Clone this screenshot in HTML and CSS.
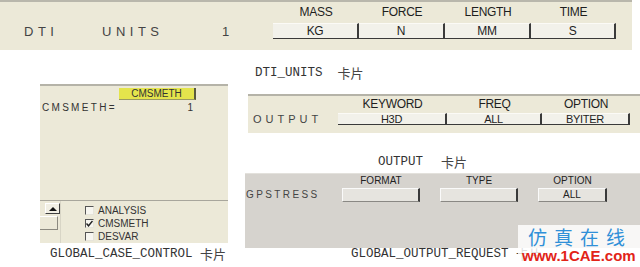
FILE: index.html
```html
<!DOCTYPE html>
<html lang="zh">
<head>
<meta charset="utf-8">
<title>DTI UNITS</title>
<link rel="stylesheet" href="styles.css">
</head>
<body>
<div class="page">
  <div class="units">
    <div class="units-grid">
      <span class="blank"></span>
      <span class="hd">MASS</span>
      <span class="hd">FORCE</span>
      <span class="hd">LENGTH</span>
      <span class="hd">TIME</span>
      <span class="units-labels"><span class="lbl dti">DTI</span><span class="lbl uw">UNITS</span><span class="lbl">1</span></span>
      <span class="fld first">KG</span>
      <span class="fld">N</span>
      <span class="fld">MM</span>
      <span class="fld">S</span>
    </div>
  </div>

  <div class="main">
    <div class="left-col">
      <div class="case-panel">
        <div class="case-top">
          <div class="yrow"><span class="ybtn">CMSMETH</span></div>
          <div class="cms-row"><span class="cms-lbl">CMSMETH=</span><span class="cms-val">1</span></div>
        </div>
        <div class="case-bottom">
          <div class="scroll">
            <span class="arrow-btn"><span class="tri"></span></span>
            <span class="scroll-box"></span>
          </div>
          <div class="checks">
            <div class="chk"><span class="box"></span>ANALYSIS</div>
            <div class="chk"><span class="box"><svg width="7" height="7" viewBox="0 0 7 7"><polyline points="0.5,3.5 2.5,5.8 6.5,1" fill="none" stroke="#222" stroke-width="1.4"/></svg></span>CMSMETH</div>
            <div class="chk"><span class="box"></span>DESVAR</div>
          </div>
        </div>
      </div>
      <div class="caption cap-case">GLOBAL_CASE_CONTROL <span class="cjk">卡片</span></div>
    </div>

    <div class="right-col">
      <div class="caption cap-dti">DTI_UNITS<span class="cjk gap15">卡片</span></div>
      <div class="output">
        <div class="out-grid">
          <span class="blank"></span>
          <span class="hd">KEYWORD</span>
          <span class="hd">FREQ</span>
          <span class="hd">OPTION</span>
          <span class="out-lbl">OUTPUT</span>
          <span class="fld first">H3D</span>
          <span class="fld">ALL</span>
          <span class="fld">BYITER</span>
        </div>
      </div>
      <div class="caption cap-out">OUTPUT<span class="cjk gap20">卡片</span></div>
      <div class="gps">
        <div class="gps-grid">
          <span class="blank"></span>
          <span class="ghd">FORMAT</span>
          <span class="ghd">TYPE</span>
          <span class="ghd">OPTION</span>
          <span class="gps-lbl">GPSTRESS</span>
          <span class="gbtn"></span>
          <span class="gbtn"></span>
          <span class="gbtn short">ALL</span>
        </div>
      </div>
      <div class="caption cap-req">GLOBAL_OUTPUT_REQUEST <span class="cjk">卡片</span></div>
    </div>
  </div>

  <div class="watermark">
    <div class="wm-cn">仿真在线</div>
    <div class="wm-url">www.1CAE.com</div>
  </div>
</div>
</body>
</html>
```

FILE: styles.css
```css
html, body {
  margin: 0;
  padding: 0;
  background: #fff;
}

.page {
  position: relative;
  width: 640px;
  height: 267px;
  overflow: hidden;
  background: #fff;
  font-family: "Liberation Sans", Arial, sans-serif;
  color: #222;
}

/* ---------- top DTI UNITS strip ---------- */
.units {
  width: 632px;
  height: 50px;
  box-sizing: border-box;
  border-top: 2px solid #b9b7ac;
  background: #ece9d8;
  padding-top: 3px;
}

.units-grid {
  display: grid;
  grid-template-columns: 273px 86px 86px 86px 85px;
  grid-template-rows: 14px 16px;
  row-gap: 4px;
}

.hd {
  font-size: 12px;
  line-height: 14px;
  text-align: center;
  letter-spacing: -0.3px;
  color: #1e1e1e;
}

.units-labels {
  display: flex;
  align-items: center;
  padding-left: 24px;
  font-size: 13px;
  letter-spacing: 4.5px;
  color: #444;
}

.lbl.dti { width: 78px; }
.lbl.uw { width: 120px; }

.fld {
  box-sizing: border-box;
  background: #f2f1ea;
  border-top: 1px solid #fbfaf6;
  border-right: 2px solid #3a3a3a;
  border-bottom: 1px solid #3a3a3a;
  font-size: 12px;
  line-height: 14px;
  text-align: center;
  letter-spacing: -0.3px;
  color: #1e1e1e;
}

/* ---------- main two columns ---------- */
.main {
  display: flex;
}

.left-col {
  margin-left: 40px;
  width: 188px;
}

.case-panel {
  margin-top: 34px;
  height: 159px;
  box-sizing: border-box;
  border-top: 2px solid #b5b3a8;
  background: #ece9d8;
  display: flex;
  flex-direction: column;
  overflow: hidden;
}

.case-top {
  height: 119px;
}

.yrow {
  padding-top: 2px;
  padding-left: 79px;
}

.ybtn {
  display: block;
  width: 77px;
  height: 12px;
  box-sizing: border-box;
  background: #e4e44c;
  border-right: 2px solid #5a5a40;
  border-bottom: 1px solid #9a9a60;
  font-size: 10px;
  line-height: 11px;
  text-align: center;
  color: #333;
}

.cms-row {
  display: flex;
  justify-content: space-between;
  padding: 3px 35px 0 2px;
  font-size: 10px;
  line-height: 10px;
  color: #333;
}

.cms-lbl { letter-spacing: 2.3px; }

.case-bottom {
  flex: 1;
  border-top: 1px solid #a8a69c;
  display: flex;
}

.scroll {
  width: 20px;
  display: flex;
  flex-direction: column;
  border-right: 1px solid #d8d5c6;
}

.arrow-btn {
  margin: 2px 0 0 5px;
  width: 15px;
  height: 11px;
  box-sizing: border-box;
  background: #f1efe4;
  border-top: 1px solid #fff;
  border-left: 1px solid #fff;
  border-right: 1px solid #404040;
  border-bottom: 1px solid #404040;
  display: flex;
  align-items: center;
  justify-content: center;
}

.tri {
  width: 0;
  height: 0;
  border-left: 4px solid transparent;
  border-right: 4px solid transparent;
  border-bottom: 4px solid #111;
}

.scroll-box {
  margin-top: 2px;
  width: 18px;
  height: 14px;
  box-sizing: border-box;
  border-top: 1px solid #fff;
  border-right: 1px solid #8c8a80;
  border-bottom: 1px solid #8c8a80;
}

.checks {
  margin-left: 24px;
  padding-top: 3px;
}

.chk {
  display: flex;
  align-items: center;
  height: 13px;
  font-size: 10px;
  color: #333;
}

.box {
  width: 9px;
  height: 9px;
  box-sizing: border-box;
  background: #f7f6f0;
  border-top: 1px solid #555;
  border-left: 1px solid #555;
  border-right: 1px solid #e6e4da;
  border-bottom: 1px solid #e6e4da;
  margin-right: 4px;
  display: flex;
  align-items: center;
  justify-content: center;
}

.caption {
  display: flex;
  align-items: center;
  height: 14px;
  font-family: "Liberation Mono", "Noto Sans CJK SC", monospace;
  font-size: 12.5px;
  line-height: 14px;
  color: #333;
  white-space: pre;
}

.cjk {
  font-family: "Noto Sans CJK SC", sans-serif;
  font-size: 13px;
  line-height: 14px;
  color: #444;
}

.gap15 { margin-left: 15px; }
.gap20 { margin-left: 18px; }

.cap-case {
  margin-top: 4px;
  padding-left: 10px;
}

.right-col {
  margin-left: 17px;
  width: 395px;
}

.cap-dti {
  margin-top: 16px;
  padding-left: 10px;
}

.output {
  margin-top: 14px;
  margin-left: 3px;
  width: 392px;
  height: 39px;
  box-sizing: border-box;
  border-top: 2px solid #b5b3a8;
  background: #ece9d8;
  padding-top: 1px;
}

.out-grid {
  display: grid;
  grid-template-columns: 90px 109px 95px 88px;
  grid-template-rows: 13px 12px;
  row-gap: 3px;
}

.out-grid .fld {
  font-size: 11px;
  line-height: 10px;
}

.out-lbl {
  padding-left: 5px;
  font-size: 11px;
  line-height: 12px;
  letter-spacing: 4px;
  color: #444;
}

.cap-out {
  margin-top: 22px;
  padding-left: 133px;
}

.gps {
  margin-top: 4px;
  width: 395px;
  height: 75px;
  box-sizing: border-box;
  border-top: 1px solid #e3e1dc;
  background: #d6d3ce;
  padding-top: 1px;
}

.gps-grid {
  display: grid;
  grid-template-columns: 97px 98px 98px 69px;
  grid-template-rows: 12px 14px;
  row-gap: 1px;
}

.ghd {
  width: 78px;
  font-size: 10px;
  line-height: 12px;
  text-align: center;
  color: #222;
}

.gps-grid .ghd:nth-child(4) { width: 69px; }

.gps-lbl {
  padding-left: 1px;
  font-size: 10px;
  line-height: 14px;
  letter-spacing: 2.4px;
  color: #444;
}

.gbtn {
  width: 78px;
  box-sizing: border-box;
  background: #e6e4df;
  border-top: 1px solid #fafafa;
  border-left: 1px solid #fafafa;
  border-right: 2px solid #3a3a3a;
  border-bottom: 1px solid #8a8884;
  font-size: 10px;
  line-height: 12px;
  text-align: center;
  color: #222;
}

.gbtn.short { width: 69px; }

.cap-req {
  margin-top: -1px;
  padding-left: 106px;
}

/* ---------- watermark (overlay) ---------- */
.watermark {
  position: absolute;
  right: 0;
  bottom: 0;
  width: 122px;
  height: 42px;
  background: rgba(255, 255, 255, 0.82);
  padding-left: 4px;
  box-sizing: border-box;
}

.wm-cn {
  padding-left: 6px;
  font-family: "Noto Sans CJK SC", sans-serif;
  font-size: 19px;
  line-height: 24px;
  letter-spacing: 7px;
  color: #3090d8;
}

.wm-url {
  font-size: 15px;
  line-height: 14px;
  font-weight: bold;
  color: #e22418;
}
```
